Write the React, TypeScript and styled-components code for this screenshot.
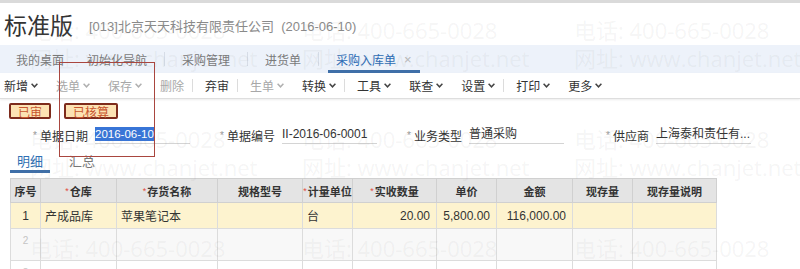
import { Fragment } from "react";
import styled, { createGlobalStyle } from "styled-components";

const GlobalStyle = createGlobalStyle`
  html, body {
    margin: 0;
    padding: 0;
    background: #fff;
  }
  body {
    font-family: "Liberation Sans", "Noto Sans CJK SC", sans-serif;
    font-size: 12px;
    color: #333;
  }
`;

const Page = styled.div`
  position: relative;
  width: 800px;
  height: 269px;
  overflow: hidden;
  border-top: 3px solid #dadada;
  box-sizing: border-box;
`;

const Header = styled.div`
  height: 42px;
  display: flex;
  align-items: center;
  padding-left: 4px;
  gap: 16px;
`;

const Title = styled.h1`
  margin: 0;
  font-size: 23px;
  font-weight: normal;
  color: #333;
  font-family: "Noto Sans CJK SC", sans-serif;
`;

const Subtitle = styled.span`
  font-size: 13px;
  color: #8a8a8a;
  margin-top: 3px;
`;

const TabBar = styled.div`
  height: 28px;
  background: #edf2fa;
  display: flex;
  align-items: stretch;
  padding-left: 8px;
  gap: 7px;
`;

const Tab = styled.div<{ $active?: boolean }>`
  display: flex;
  align-items: center;
  gap: 8px;
  padding: 3px 8px 0;
  box-sizing: border-box;
  color: ${(p) => (p.$active ? "#2c6cb5" : "#7a7a7a")};
  border-bottom: 3px solid ${(p) => (p.$active ? "#3f6fa8" : "transparent")};
`;

const TabClose = styled.span`
  color: #b8b8b8;
  font-size: 13px;
`;

const TabDivider = styled.span`
  align-self: center;
  width: 1px;
  height: 14px;
  margin: 0 2px;
  background: #d6dce6;
`;

const Toolbar = styled.div`
  height: 25px;
  display: flex;
  align-items: center;
  padding-left: 4px;
  border-bottom: 1px solid #dedede;
  box-shadow: 0 1px 2px rgba(0, 0, 0, 0.08);
`;

const ToolGroup = styled.div`
  display: flex;
  align-items: center;
  gap: 18px;
`;

const ToolButton = styled.span<{ $disabled?: boolean }>`
  display: inline-flex;
  align-items: center;
  gap: 3px;
  color: ${(p) => (p.$disabled ? "#a8a8a8" : "#333")};
`;

const ToolDivider = styled.span`
  width: 1px;
  height: 13px;
  background: #dcdcdc;
  margin: 0 12px 0 8px;
`;

const BadgeRow = styled.div`
  display: flex;
  gap: 13px;
  padding: 4px 0 0 9px;
`;

const Badge = styled.span`
  display: inline-flex;
  align-items: center;
  justify-content: center;
  height: 16px;
  padding: 0 7px;
  box-sizing: border-box;
  background: #fce2b3;
  border: 2px solid #7d2b1c;
  border-radius: 2px;
  color: #c9552f;
  font-size: 12px;
`;

const FormRow = styled.div`
  display: grid;
  grid-template-columns: repeat(4, 187px);
  padding-left: 30px;
  margin-top: 7px;
`;

const Field = styled.div`
  display: flex;
  align-items: center;
`;

const FieldLabel = styled.span`
  width: 58px;
  text-align: right;
  color: #333;
  white-space: nowrap;

  &::before {
    content: "*";
    color: #999;
    font-size: 10px;
    margin-right: 3px;
    vertical-align: 2px;
  }
`;

const FieldValue = styled.span`
  margin-left: 7px;
  width: 95px;
  height: 17px;
  line-height: 17px;
  border-bottom: 1px solid #d4d4d4;
  white-space: nowrap;
  color: #333;
`;

const Selected = styled.span`
  background: #3875d7;
  color: #fff;
  font-size: 11.5px;
  padding: 1px 0;
`;

const DetailTabs = styled.div`
  display: flex;
  gap: 12px;
  margin: 6px 0 0 10px;
`;

const DetailTab = styled.div<{ $active?: boolean }>`
  height: 23px;
  box-sizing: border-box;
  padding: 1px 7px 0;
  display: flex;
  align-items: center;
  font-size: 13px;
  color: ${(p) => (p.$active ? "#2f6fb3" : "#777")};
  border-bottom: 3px solid ${(p) => (p.$active ? "#3f6fa8" : "transparent")};
`;

const Grid = styled.table`
  margin: 5px 0 0 10px;
  width: 706px;
  border-collapse: collapse;
  table-layout: fixed;
  border-top: 1px solid #d6d6d6;
`;

const HeadCell = styled.th`
  height: 23px;
  padding: 0;
  background: #e4e4e4;
  border: 1px solid #d0d0d0;
  font-weight: bold;
  font-size: 11px;
  color: #333;
  text-align: center;
  white-space: nowrap;
  overflow: hidden;
`;

const Req = styled.span`
  color: #e24a3b;
  font-weight: normal;
  font-size: 9px;
  margin-right: 1px;
  vertical-align: 2px;
`;

const Row = styled.tr<{ $bg: string }>`
  background: ${(p) => p.$bg};
`;

const Cell = styled.td<{ $align?: "left" | "right" | "center" }>`
  height: 25px;
  padding: 0 6px 0 4px;
  border: 1px solid #dcdcdc;
  text-align: ${(p) => p.$align ?? "left"};
  white-space: nowrap;
  color: #333;
`;

const IndexCell = styled.td<{ $faint?: boolean }>`
  height: 25px;
  padding: ${(p) => (p.$faint ? "6px 0 0" : "0")};
  border: 1px solid #dcdcdc;
  text-align: center;
  vertical-align: ${(p) => (p.$faint ? "top" : "middle")};
  font-size: ${(p) => (p.$faint ? "10px" : "12px")};
  color: ${(p) => (p.$faint ? "#c4c4c4" : "#333")};
`;

const Watermarks = styled.div`
  position: absolute;
  inset: 0;
  pointer-events: none;
  display: grid;
  grid-template-columns: repeat(3, 272px);
  grid-auto-rows: 109px;
  padding: 13px 0 0 30px;
  font-family: "Open Sans", "Noto Sans CJK SC", sans-serif;
  font-size: 22px;
  line-height: 28px;
  color: rgba(120, 120, 120, 0.08);
  white-space: nowrap;
`;

const Annotation = styled.div`
  position: absolute;
  left: 59px;
  top: 59px;
  width: 96px;
  height: 95px;
  box-sizing: border-box;
  border: 1.5px solid #a9463f;
  pointer-events: none;
`;

const Chevron = ({ color }: { color: string }) => (
  <svg width="7" height="5" viewBox="0 0 7 5">
    <path d="M0.6 0.8 L3.5 3.8 L6.4 0.8" fill="none" stroke={color} strokeWidth="1.5" />
  </svg>
);

type Tool = { label: string; menu?: boolean; disabled?: boolean };

const toolGroups: Tool[][] = [
  [
    { label: "新增", menu: true },
    { label: "选单", menu: true, disabled: true },
    { label: "保存", menu: true, disabled: true },
    { label: "删除", disabled: true },
  ],
  [{ label: "弃审" }],
  [
    { label: "生单", menu: true, disabled: true },
    { label: "转换", menu: true },
  ],
  [
    { label: "工具", menu: true },
    { label: "联查", menu: true },
    { label: "设置", menu: true },
  ],
  [
    { label: "打印", menu: true },
    { label: "更多", menu: true },
  ],
];

const columns = [
  { title: "序号", width: 30 },
  { title: "仓库", width: 76, req: true },
  { title: "存货名称", width: 101, req: true },
  { title: "规格型号", width: 85 },
  { title: "计量单位", width: 50, req: true },
  { title: "实收数量", width: 84, req: true },
  { title: "单价", width: 60 },
  { title: "金额", width: 76 },
  { title: "现存量", width: 60 },
  { title: "现存量说明", width: 84 },
];

export default function App() {
  return (
    <>
      <GlobalStyle />
      <Page>
        <Header>
          <Title>标准版</Title>
          <Subtitle>[013]北京天天科技有限责任公司 &nbsp;(2016-06-10)</Subtitle>
        </Header>

        <TabBar>
          <Tab>我的桌面</Tab>
          <Tab>初始化导航</Tab>
          <TabDivider />
          <Tab>采购管理</Tab>
          <TabDivider />
          <Tab>进货单</Tab>
          <TabDivider />
          <Tab $active>
            采购入库单
            <TabClose>×</TabClose>
          </Tab>
        </TabBar>

        <Toolbar>
          {toolGroups.map((group, gi) => (
            <Fragment key={gi}>
              {gi > 0 && <ToolDivider />}
              <ToolGroup>
                {group.map((t) => (
                  <ToolButton key={t.label} $disabled={t.disabled}>
                    {t.label}
                    {t.menu && <Chevron color={t.disabled ? "#b0b0b0" : "#444"} />}
                  </ToolButton>
                ))}
              </ToolGroup>
            </Fragment>
          ))}
        </Toolbar>

        <BadgeRow>
          <Badge>已审</Badge>
          <Badge>已核算</Badge>
        </BadgeRow>

        <FormRow>
          <Field>
            <FieldLabel>单据日期</FieldLabel>
            <FieldValue>
              <Selected>2016-06-10</Selected>
            </FieldValue>
          </Field>
          <Field>
            <FieldLabel>单据编号</FieldLabel>
            <FieldValue>II-2016-06-0001</FieldValue>
          </Field>
          <Field>
            <FieldLabel>业务类型</FieldLabel>
            <FieldValue>普通采购</FieldValue>
          </Field>
          <Field>
            <FieldLabel>供应商</FieldLabel>
            <FieldValue>上海泰和责任有...</FieldValue>
          </Field>
        </FormRow>

        <DetailTabs>
          <DetailTab $active>明细</DetailTab>
          <DetailTab>汇总</DetailTab>
        </DetailTabs>

        <Grid>
          <colgroup>
            {columns.map((c) => (
              <col key={c.title} style={{ width: c.width }} />
            ))}
          </colgroup>
          <thead>
            <tr>
              {columns.map((c) => (
                <HeadCell key={c.title}>
                  {c.req && <Req>*</Req>}
                  {c.title}
                </HeadCell>
              ))}
            </tr>
          </thead>
          <tbody>
            <Row $bg="#fdf3cf">
              <IndexCell>1</IndexCell>
              <Cell>产成品库</Cell>
              <Cell>苹果笔记本</Cell>
              <Cell />
              <Cell>台</Cell>
              <Cell $align="right">20.00</Cell>
              <Cell $align="right">5,800.00</Cell>
              <Cell $align="right">116,000.00</Cell>
              <Cell />
              <Cell />
            </Row>
            {[2, 3].map((n) => (
              <Row key={n} $bg={n === 2 ? "#f8f8f8" : "#fff"}>
                <IndexCell $faint>{n}</IndexCell>
                {columns.slice(1).map((c) => (
                  <Cell key={c.title} />
                ))}
              </Row>
            ))}
          </tbody>
        </Grid>

        <Watermarks>
          {Array.from({ length: 9 }).map((_, i) => (
            <div key={i}>
              <div>电话: 400-665-0028</div>
              {i < 6 && <div>网址: www.chanjet.net</div>}
            </div>
          ))}
        </Watermarks>

        <Annotation />
      </Page>
    </>
  );
}
